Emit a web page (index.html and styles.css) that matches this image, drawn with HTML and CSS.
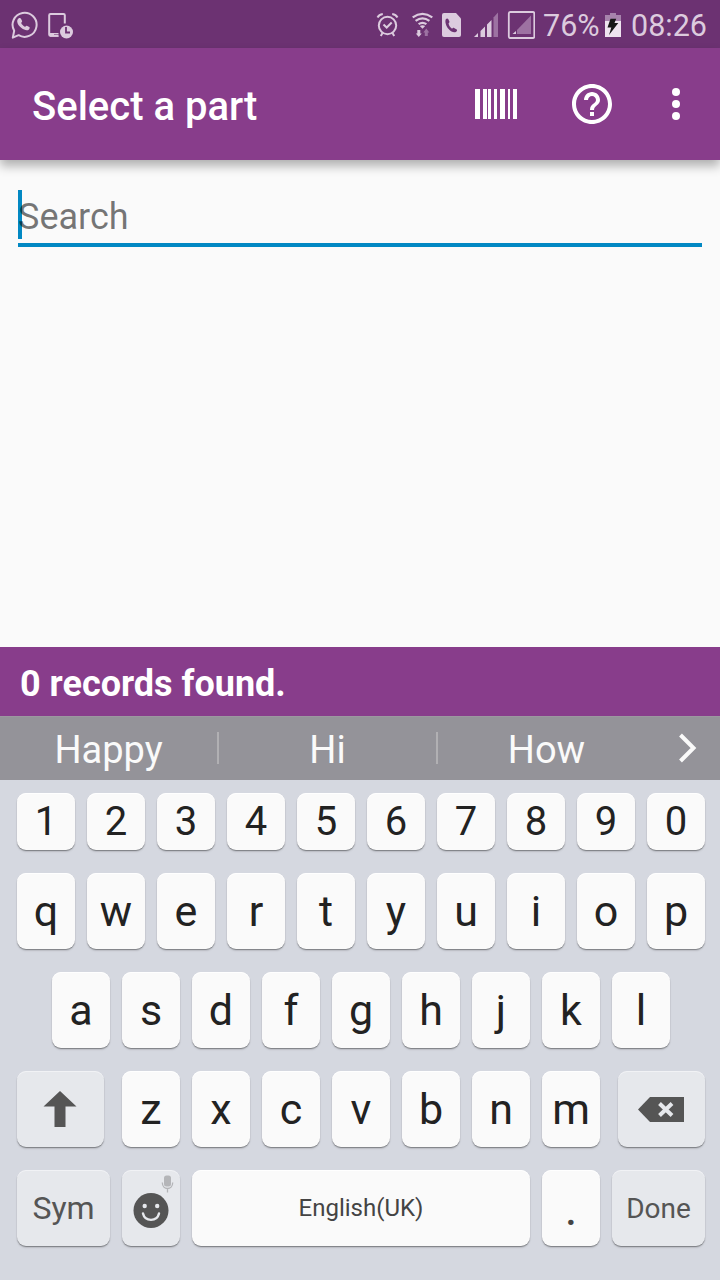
FILE: index.html
```html
<!DOCTYPE html>
<html lang="en">
<head>
<meta charset="utf-8">
<title>Select a part</title>
<link rel="stylesheet" href="styles.css">
</head>
<body>
<div class="screen">
  <div class="status">
    <svg class="ic-whatsapp" width="28" height="30" viewBox="10 10 28 30">
      <path d="M12.800 37.600 14.200 30.800A12 12 0 1 1 18.600 35.200Z" fill="none" stroke="#dccbde" stroke-width="2" stroke-linejoin="round"/>
      <path d="M18.500 18.400c1-.7 2.200-.4 2.600.5l1 2.200c.3.900-.9 1.500-.9 2 .7 1.600 2 2.800 3.600 3.600.7.200 1.200-1.300 2-1l2.500 1.300c.8.500.3 2-.6 2.700-1.700 1.200-4.500.5-7.200-1.600-2.500-2-4.200-4.500-4.300-6.700 0-1.200.5-2.300 1.300-3Z" fill="#dccbde"/>
    </svg>
    <svg class="ic-phone-clock" width="28" height="30" viewBox="46 10 28 30">
      <path d="M58.500 35.800H50.500q-1.300 0-1.300-1.300V15.300q0-1.300 1.300-1.300H63.500q1.300 0 1.300 1.300V23.500" fill="none" stroke="#dccbde" stroke-width="2"/>
      <path d="M49 33h9.500v1.200H54v1.600h4.500v1H50z" fill="#dccbde"/>
      <circle cx="66.500" cy="32" r="6.500" fill="#dccbde"/>
      <path d="M66 27v5.500h4" fill="none" stroke="#6c3272" stroke-width="1.800"/>
    </svg>
    <div class="status-right">
      <svg width="28" height="30" viewBox="374 10 28 30" fill="none" stroke="#dccbde" stroke-width="2">
        <circle cx="387.500" cy="25.500" r="8.700"/>
        <path d="M383.500 24.500 386.700 27.500 391.700 22.500M377.500 17.500Q379 14.500 382.800 14M397.500 17.500Q396 14.500 392.200 14M382.500 33 380.800 36M392.500 33 394.200 36"/>
      </svg>
      <svg class="ic-wifi" width="28" height="30" viewBox="409 10 28 30">
        <path d="M412.700 17.300Q422.500 10.300 432.300 17.300M415.600 20.800Q422.500 15.800 429.400 20.800M418.600 24.200Q422.500 21.500 426.400 24.200" fill="none" stroke="#dccbde" stroke-width="2.200"/>
        <path d="M419.800 26 422.500 28.700 425.200 26Q422.500 24.500 419.800 26M417.300 30h3v3.500h1.500L418.800 37l-3-3.500h1.500z" fill="#dccbde"/>
        <path d="M424.800 36h3v-3.500h1.500L426.300 28.500l-3 4h1.500z" fill="#9d72a2"/>
      </svg>
      <svg class="ic-call" width="22" height="30" viewBox="440 10 22 30">
        <path d="M444 13H456L461 18.500V35Q461 37 459 37H444Q442 37 442 35V15Q442 13 444 13Z" fill="#dccbde"/>
        <path d="M445.800 19.200c.7-.9 2-.9 2.400-.1l1.200 2.300c.4.900-1 1.600-.8 2.300.5 2 1.600 3.600 3.100 4.800.7.400 1.700-1 2.400-.6l2.600 1.500c.8.600.2 1.900-.9 2.600-1.900 1-4.700-.2-7.200-2.900-2.400-2.800-4-7.500-2.800-9.900Z" fill="#6c3272"/>
      </svg>
      <svg class="ic-signal" width="26" height="30" viewBox="473 10 26 30">
        <path d="M474 37 478 33V37ZM480.500 31 485 26.500V37H480.500ZM487 24.500 491.500 20V37H487Z" fill="#dccbde"/>
        <path d="M493.500 17.500 498 12.500V37H493.500Z" fill="#9d72a2"/>
      </svg>
      <svg class="ic-signal2" width="28" height="30" viewBox="507 10 28 30">
        <rect x="508.800" y="12" width="25.500" height="26" rx="1.500" fill="none" stroke="#dccbde" stroke-width="1.800"/>
        <path d="M517 30 531 15.500V34H517Z" fill="#9d72a2"/>
        <path d="M512.500 34 516 31V34Z" fill="#dccbde"/>
      </svg>
      <span class="pct">76%</span>
      <svg class="ic-battery" width="18" height="26" viewBox="604 12 18 26">
        <path d="M605 21V15h5v-2h6v2h5v6z" fill="#a783ac"/>
        <path d="M605 21h16v16h-16z" fill="#eee3ef"/>
        <path d="M610.500 18.700h5.700L614.500 23h3.800L609 35l2.300-7.500H607.500Z" fill="#171717"/>
      </svg>
      <span class="clock">08:26</span>
    </div>
  </div>

  <header class="appbar">
    <h1>Select a part</h1>
    <svg class="ic-barcode" width="42" height="30" viewBox="0 0 42 30" fill="#fff">
      <path d="M0 0h5v30H0zM8 0h4v30H8zM13 0h3v30h-3zM19 0h3v30h-3zM25 0h5v30h-5zM33 0h2v30h-2zM38 0h4v30h-4z"/>
    </svg>
    <svg class="ic-help" width="48" height="48" viewBox="0 0 24 24" fill="#fff">
      <path d="M11 18h2v-2h-2v2zm1-16C6.480 2 2 6.480 2 12s4.480 10 10 10 10-4.480 10-10S17.520 2 12 2zm0 18c-4.410 0-8-3.590-8-8s3.590-8 8-8 8 3.590 8 8-3.590 8-8 8zm0-14c-2.210 0-4 1.790-4 4h2c0-1.100.9-2 2-2s2 .9 2 2c0 2-3 1.750-3 5h2c0-2.250 3-2.500 3-5 0-2.210-1.790-4-4-4z"/>
    </svg>
    <svg class="ic-more" width="8" height="32" viewBox="0 0 8 32" fill="#fff">
      <circle cx="4" cy="4" r="4"/><circle cx="4" cy="16" r="4"/><circle cx="4" cy="28" r="4"/>
    </svg>
  </header>

  <main class="content">
    <div class="search"><span class="caret"></span><span class="hint">Search</span></div>
  </main>

  <div class="records">0 records found.</div>

  <div class="suggest">
    <span class="word">Happy</span><span class="word">Hi</span><span class="word">How</span>
    <svg class="ic-next" width="20" height="32" viewBox="0 0 20 32"><path d="M2.500 3 15.500 16 2.500 29" fill="none" stroke="#fafafa" stroke-width="4"/></svg>
  </div>

  <div class="keyboard">
    <div class="row digits">
      <span class="key">1</span><span class="key">2</span><span class="key">3</span><span class="key">4</span><span class="key">5</span><span class="key">6</span><span class="key">7</span><span class="key">8</span><span class="key">9</span><span class="key">0</span>
    </div>
    <div class="row">
      <span class="key">q</span><span class="key">w</span><span class="key">e</span><span class="key">r</span><span class="key">t</span><span class="key">y</span><span class="key">u</span><span class="key">i</span><span class="key">o</span><span class="key">p</span>
    </div>
    <div class="row home">
      <span class="key">a</span><span class="key">s</span><span class="key">d</span><span class="key">f</span><span class="key">g</span><span class="key">h</span><span class="key">j</span><span class="key">k</span><span class="key">l</span>
    </div>
    <div class="row lower">
      <span class="key fn shift"><svg width="34" height="36" viewBox="0 0 34 36"><path d="M17 0 33.500 15.500H22.500V36H11.500V15.500H.5Z" fill="#555"/></svg></span>
      <span class="key">z</span><span class="key">x</span><span class="key">c</span><span class="key">v</span><span class="key">b</span><span class="key">n</span><span class="key">m</span>
      <span class="key fn back"><svg width="46" height="25" viewBox="0 0 46 25"><path d="M0 12.500 12 0H46V25H12Z" fill="#555"/><path d="M21.500 6.500 34 18.500M34 6.500 21.500 18.500" stroke="#e6e8ec" stroke-width="4"/></svg></span>
    </div>
    <div class="row bottom">
      <span class="key fn sym">Sym</span>
      <span class="key fn emoji">
        <svg width="58" height="76" viewBox="0 0 58 76">
          <circle cx="29" cy="40.500" r="17.500" fill="#555"/>
          <circle cx="22.700" cy="36" r="2.200" fill="#e6e8ec"/><circle cx="35.200" cy="36" r="2.200" fill="#e6e8ec"/>
          <path d="M21 43.500C23 52 35 52 37 43.500" fill="none" stroke="#e6e8ec" stroke-width="2.400" stroke-linecap="round"/>
          <rect x="42" y="5.500" width="7" height="11" rx="2.500" fill="#b4b5b8"/>
          <path d="M40.300 12.500C40.300 20.500 50.700 20.500 50.700 12.500M45.500 18.500V22.500" fill="none" stroke="#b4b5b8" stroke-width="1.300"/>
        </svg>
      </span>
      <span class="key space">English(UK)</span>
      <span class="key dot">.</span>
      <span class="key fn done">Done</span>
    </div>
  </div>
</div>
</body>
</html>
```
FILE: styles.css
```css
* { box-sizing: border-box; }
body { margin: 0; font-family: Roboto, sans-serif; }
svg { display: block; flex: none; }

.screen {
  width: 720px;
  height: 1280px;
  display: flex;
  flex-direction: column;
  overflow: hidden;
  background: #fafafa;
}

.status {
  height: 48px;
  flex: none;
  display: flex;
  align-items: center;
  padding: 2px 13px 0 10px;
  background: #6c3272;
  color: #dccbde;
  font-size: 30.5px;
  line-height: 48px;
}
.ic-phone-clock { margin-left: 8px; }
.status-right { margin-left: auto; display: flex; align-items: center; }
.ic-wifi { margin-left: 7px; }
.ic-call { margin-left: 3px; }
.ic-signal { margin-left: 11px; }
.ic-signal2 { margin-left: 8px; }
.pct, .clock { padding-top: 2px; white-space: nowrap; }
.pct { width: 61px; margin-left: 8px; }
.clock { width: 76px; margin-left: 9px; }

.appbar {
  height: 112px;
  flex: none;
  display: flex;
  align-items: center;
  padding: 0 40px 0 32px;
  background: #883d8b;
  color: #fff;
  box-shadow: 0 6px 10px rgba(0, 0, 0, .3);
}
.appbar h1 {
  margin: 6px auto 0 0;
  font-size: 40px;
  font-weight: 500;
  line-height: 48px;
}
.ic-help { margin-left: 51px; }
.ic-more { margin-left: 56px; }

.content { flex: 1; padding: 30px 18px 0; }
.search {
  height: 57px;
  display: flex;
  border-bottom: 4px solid #0288c3;
}
.caret { width: 4px; height: 49px; background: #0288c3; }
.hint {
  margin-left: -4px;
  padding-top: 2px;
  font-size: 36px;
  line-height: 50px;
  color: rgba(0, 0, 0, .54);
}

.records {
  height: 69px;
  flex: none;
  padding: 3px 20px 0;
  background: #883d8b;
  color: #fff;
  font-size: 36px;
  font-weight: 700;
  line-height: 69px;
}

.suggest {
  height: 64px;
  flex: none;
  display: flex;
  align-items: center;
  background: #949399;
  border-top: 1px solid #9c98a0;
  color: #fafafa;
  font-size: 38px;
  line-height: 64px;
}
.word {
  width: 219px;
  height: 64px;
  padding: 1px 2px 0 0;
  text-align: center;
  background: linear-gradient(#b1b0b3, #b1b0b3) right 15px / 2px 32px no-repeat;
}
.word:nth-child(3) { background: none; }
.ic-next { margin: 0 0 2px 21px; }

.keyboard {
  height: 500px;
  flex: none;
  display: flex;
  flex-direction: column;
  gap: 23px;
  padding-top: 13px;
  background: #d5d8e0;
}
.row {
  height: 76px;
  display: flex;
  gap: 12px;
  padding: 0 15px 0 17px;
}
.digits { height: 57px; }
.home { padding-left: 52px; }
.key {
  width: 58px;
  flex: none;
  display: flex;
  align-items: center;
  justify-content: center;
  border-radius: 9px;
  background: #fafafa;
  box-shadow: inset 0 1px 0 #fff, 0 1px 1px rgba(0, 0, 0, .35), 0 2px 2px rgba(0, 0, 0, .1);
  color: #222;
  font-size: 43px;
  line-height: 44px;
}
.digits .key { padding-top: 1px; font-size: 40px; }
.key.fn {
  background: #e6e8ec;
  box-shadow: inset 0 1px 0 #f1f2f5, 0 1px 1px rgba(0, 0, 0, .35), 0 2px 2px rgba(0, 0, 0, .1);
  color: #555;
}
.key.shift { width: 87px; margin-right: 6px; padding-right: 2px; }
.key.back { width: 87px; margin-left: 6px; padding-right: 2px; }
.key.sym { width: 93px; font-size: 32px; }
.key.space { width: 338px; font-size: 24px; color: #444; }
.key.dot { padding-top: 2px; color: #444; font-size: 48px; }
.key.done { width: 93px; padding-top: 2px; font-size: 28px; }
```
